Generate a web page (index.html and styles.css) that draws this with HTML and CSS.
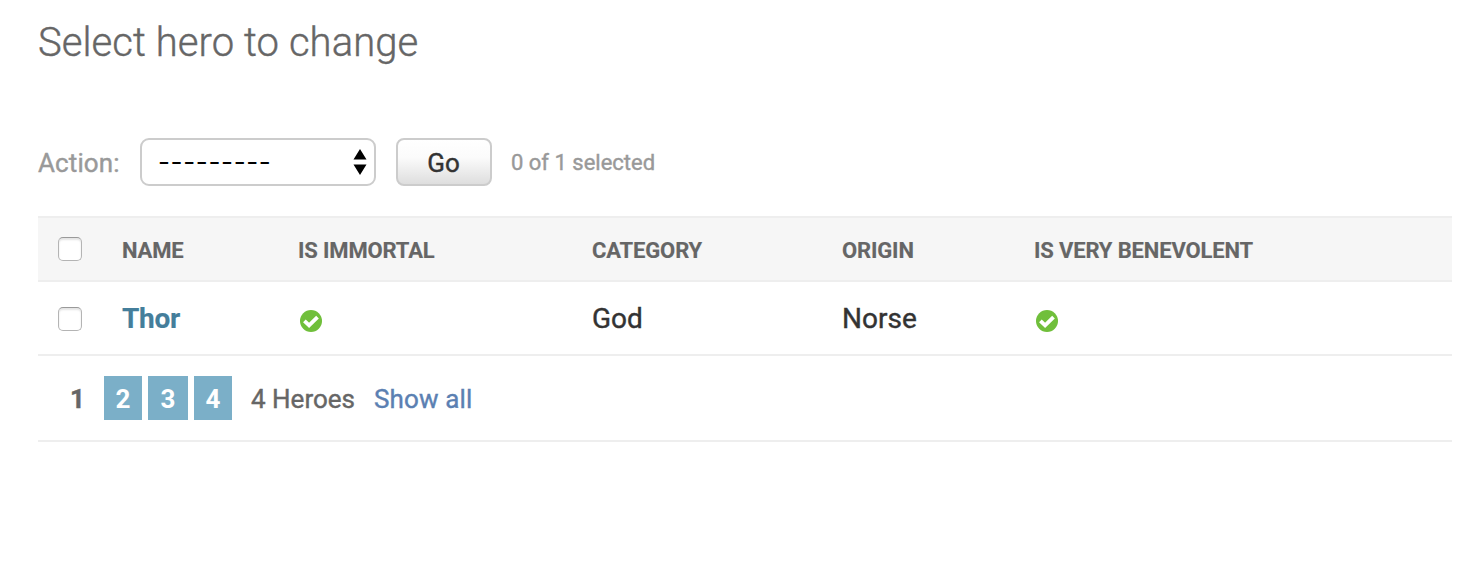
FILE: index.html
```html
<!DOCTYPE html>
<html lang="en">
<head>
<meta charset="utf-8">
<title>Select hero to change</title>
<link rel="stylesheet" href="styles.css">
</head>
<body>
<main class="content">
  <h1 class="title">Select hero to change</h1>
  <div class="actions">
    <span class="label">Action:</span>
    <div class="select" role="combobox" aria-label="Action">
      <span class="select-value">---------</span>
      <svg class="arrows" width="14" height="26" viewBox="0 0 14 26"><path d="M7 0l6.5 10.5H.5zM.5 15.5h13L7 26z"/></svg>
    </div>
    <button class="go" type="button">Go</button>
    <span class="counter">0 of 1 selected</span>
  </div>
  <table class="results">
    <colgroup><col class="c-check"><col class="c-name"><col class="c-immortal"><col class="c-category"><col class="c-origin"><col></colgroup>
    <thead>
      <tr>
        <th><input class="check" type="checkbox" aria-label="Select all"></th>
        <th>NAME</th><th>IS IMMORTAL</th><th>CATEGORY</th><th>ORIGIN</th><th>IS VERY BENEVOLENT</th>
      </tr>
    </thead>
    <tbody>
      <tr>
        <td><input class="check" type="checkbox" aria-label="Select Thor"></td>
        <td><a class="name">Thor</a></td>
        <td><svg class="yes" width="22" height="22" viewBox="0 0 22 22"><circle cx="11" cy="11" r="11"/><path d="M4.4 10.8l4.7 4.6 8.4-8.3"/></svg></td>
        <td>God</td>
        <td>Norse</td>
        <td><svg class="yes" width="22" height="22" viewBox="0 0 22 22"><circle cx="11" cy="11" r="11"/><path d="M4.4 10.8l4.7 4.6 8.4-8.3"/></svg></td>
      </tr>
    </tbody>
  </table>
  <nav class="paginator">
    <span class="current">1</span>
    <div class="pages"><a class="page">2</a><a class="page page-wide">3</a><a class="page">4</a></div>
    <span class="total">4 Heroes</span>
    <a class="showall">Show all</a>
  </nav>
</main>
</body>
</html>
```
FILE: styles.css
```css
body {
  margin: 0;
  background: #fff;
  color: #333;
  font-family: Roboto, "Liberation Sans", sans-serif;
  -webkit-text-stroke: 0.4px currentColor;
}
.content {
  padding: 19px 32px 0 38px;
}
.title {
  margin: 0 0 71px;
  font-size: 40px;
  font-weight: 300;
  line-height: 48px;
  letter-spacing: 0.07px;
  color: #666;
}
.actions {
  display: flex;
  align-items: center;
  height: 48px;
  margin-bottom: 30px;
  color: #999;
  white-space: nowrap;
}
.label {
  width: 102px;
  padding-top: 2px;
  font-size: 26px;
  line-height: 48px;
  letter-spacing: 0.1px;
}
.select {
  box-sizing: border-box;
  display: flex;
  align-items: center;
  justify-content: space-between;
  width: 236px;
  height: 48px;
  padding: 0 7px 0 16px;
  border: 2px solid #ccc;
  border-radius: 9px;
  color: #000;
}
.select-value {
  font: 26px/44px Inter, Roboto, sans-serif;
  letter-spacing: 0.65px;
  -webkit-text-stroke-width: 0;
}
.go {
  box-sizing: border-box;
  width: 96px;
  height: 48px;
  margin: 0 19px 0 20px;
  padding: 0 1px 0 0;
  border: 2px solid #ccc;
  border-radius: 8px;
  background: linear-gradient(#fff 0%, #fbfbfb 40%, #dedede 100%);
  color: #333;
  font: 26px/46px Roboto, "Liberation Sans", sans-serif;
  -webkit-text-stroke: 0.4px currentColor;
}
.counter {
  font-size: 22px;
}
.results {
  width: 1414px;
  table-layout: fixed;
  border-collapse: separate;
  border-spacing: 0;
}
.c-check { width: 64px; }
.c-name { width: 176px; }
.c-immortal { width: 294px; }
.c-category { width: 250px; }
.c-origin { width: 192px; }
.results th,
.results td {
  padding: 0 0 0 20px;
  border-bottom: 2px solid #eee;
  text-align: left;
  vertical-align: middle;
  white-space: nowrap;
}
.results th {
  height: 58px;
  padding-top: 4px;
  border-top: 2px solid #eee;
  background: #f6f6f6;
  color: #666;
  font-size: 22px;
  font-weight: 700;
  line-height: 58px;
  letter-spacing: -0.15px;
  -webkit-text-stroke-width: 0.15px;
}
.results th:first-child {
  height: 62px;
  padding-top: 0;
}
.results td {
  height: 70px;
  padding-top: 2px;
  font-size: 28px;
  line-height: 70px;
}
.check {
  appearance: none;
  display: block;
  width: 24px;
  height: 24px;
  margin: 0;
  border: 1px solid #b4b4b4;
  border-top-color: #999;
  border-radius: 5px;
  background: #fff;
  box-shadow: inset 0 2px 2px #e4e4e4;
}
.results th .check {
  margin-bottom: 1px;
}
.name {
  color: #447e9b;
  font-weight: 700;
  letter-spacing: -0.3px;
  -webkit-text-stroke-width: 0.15px;
}
.yes {
  display: block;
  margin: 4px 0 0 2px;
}
.yes circle { fill: #70bf2b; }
.yes circle { fill: #70bf3b; }
.yes path {
  fill: none;
  stroke: #fff;
  stroke-width: 3.8;
}
.paginator {
  display: flex;
  align-items: center;
  height: 84px;
  border-bottom: 2px solid #eee;
  color: #666;
  font-size: 26px;
  line-height: 44px;
  white-space: nowrap;
}
.current {
  width: 34px;
  padding: 2px 0 0 32px;
  font-weight: 700;
}
.pages {
  display: flex;
  gap: 6px;
  margin-right: 19px;
}
.page {
  box-sizing: border-box;
  width: 38px;
  height: 44px;
  padding-top: 1px;
  background: #7bafc8;
  color: #fff;
  font-weight: 700;
  text-align: center;
  -webkit-text-stroke-width: 0;
}
.page-wide { width: 40px; }
.total,
.showall { padding-top: 2px; }
.total { margin-right: 19px; }
.showall {
  color: #5b80b2;
  letter-spacing: 0.15px;
}
```
